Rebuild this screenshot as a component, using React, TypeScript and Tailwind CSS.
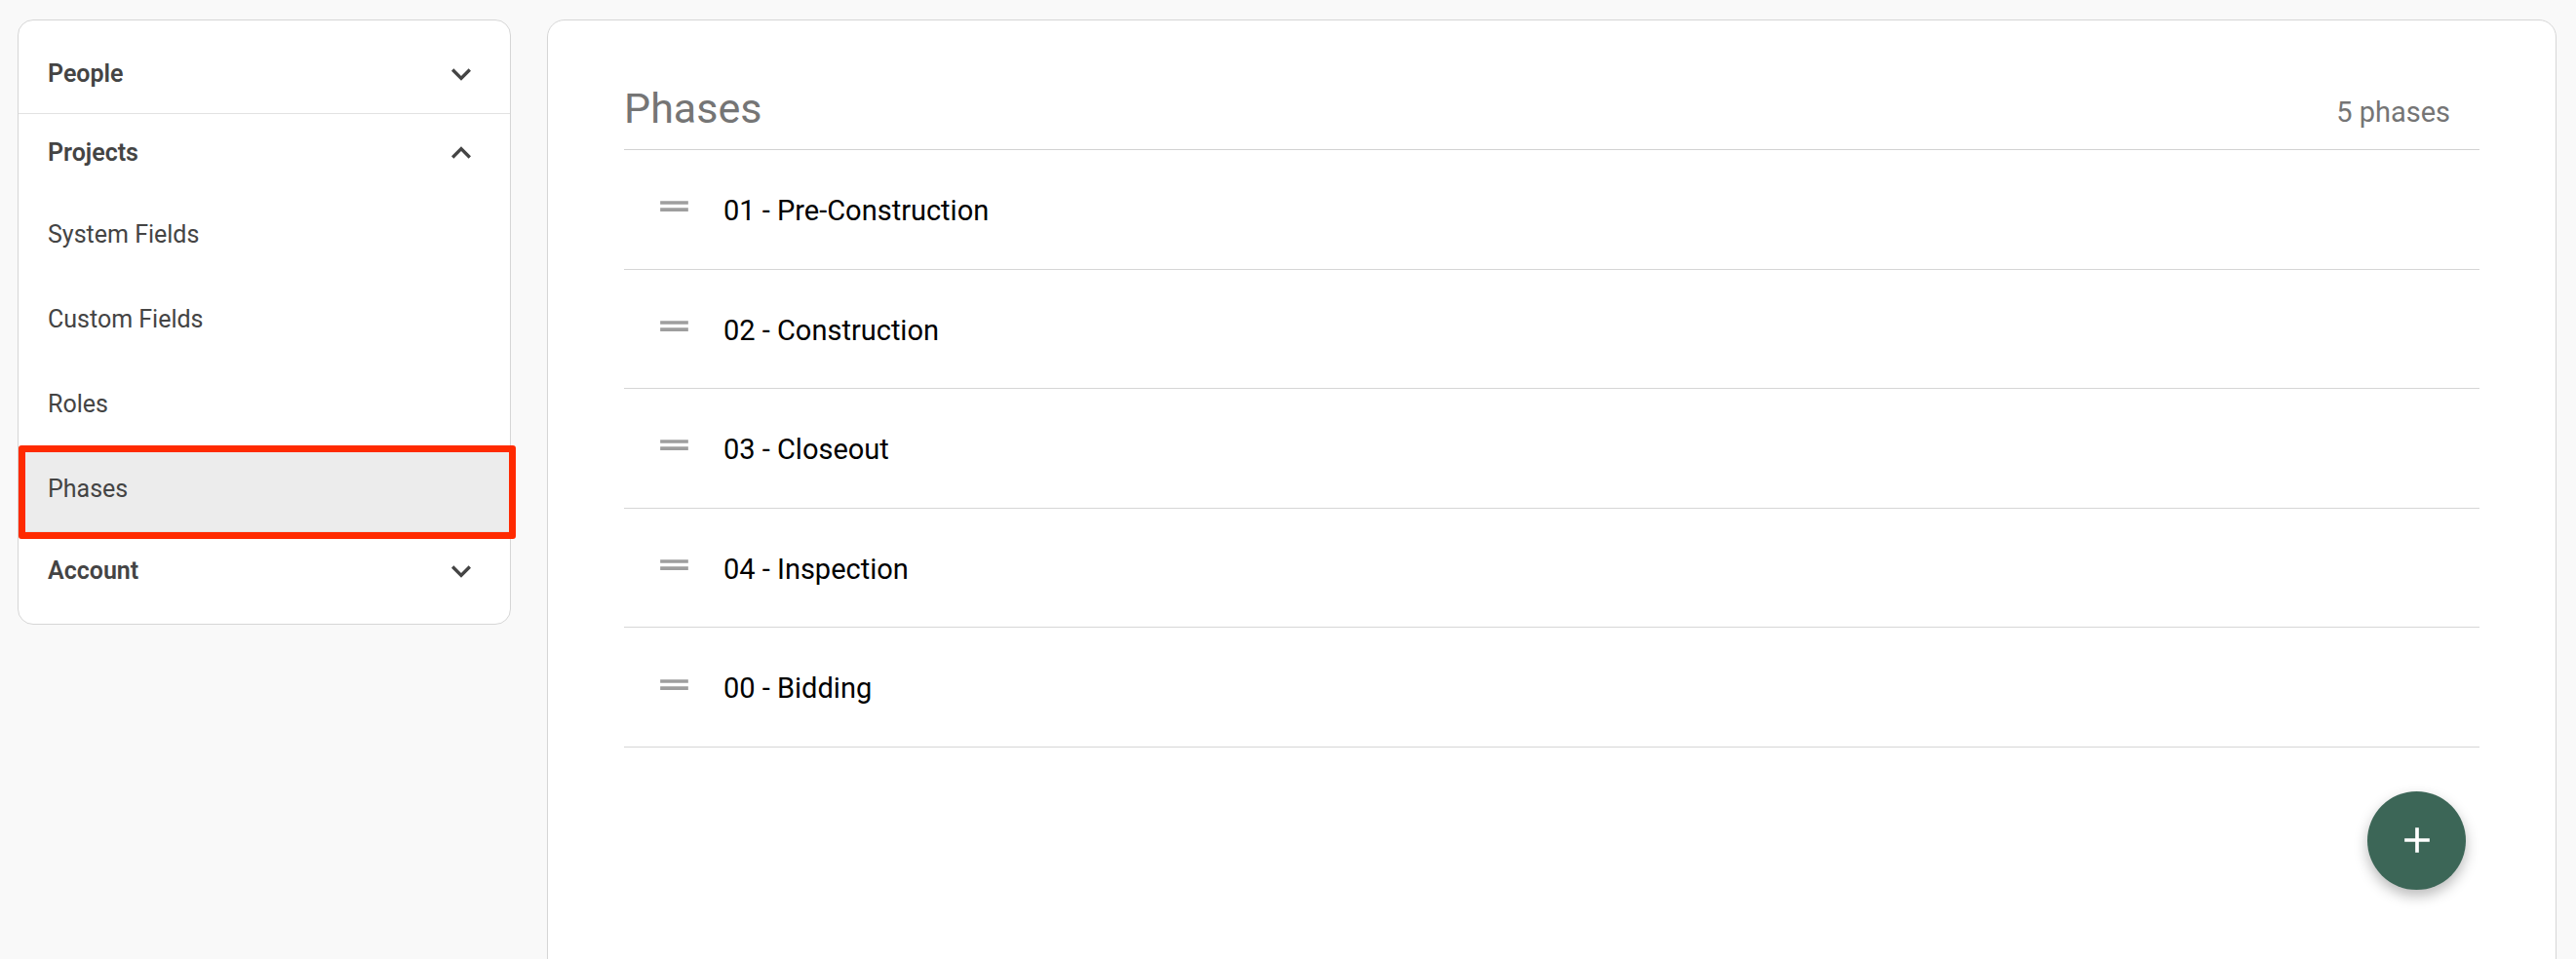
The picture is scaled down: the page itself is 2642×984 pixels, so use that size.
import { MdExpandMore, MdExpandLess, MdDragHandle, MdAdd } from "react-icons/md";

const phases = [
  "01 - Pre-Construction",
  "02 - Construction",
  "03 - Closeout",
  "04 - Inspection",
  "00 - Bidding",
];

const projectItems = ["System Fields", "Custom Fields", "Roles", "Phases"];

function SectionHeader({ label, open }: { label: string; open?: boolean }) {
  return (
    <div className="flex h-[80px] items-center justify-between pl-[30px] pr-[30px]">
      <span className="text-[25px] font-semibold text-[#444]">{label}</span>
      {open ? (
        <MdExpandLess className="h-[40px] w-[40px] text-[#444]" />
      ) : (
        <MdExpandMore className="h-[40px] w-[40px] text-[#444]" />
      )}
    </div>
  );
}

function Sidebar() {
  return (
    <aside className="w-[506px] shrink-0 self-start rounded-[16px] border border-[#d6d6d6] bg-white pt-[15px] pb-[14px]">
      <div className="border-b border-[#e2e2e2]">
        <SectionHeader label="People" />
      </div>
      <div className="border-b border-[#e2e2e2]">
        <SectionHeader label="Projects" open />
        {projectItems.map((item) => {
          const active = item === "Phases";
          return (
            <div
              key={item}
              className={`relative flex h-[87px] items-center pl-[30px] text-[25px] text-[#444] ${active ? "bg-[#ececec]" : ""}`}
            >
              {item}
              {active && (
                <div className="pointer-events-none absolute -top-[1px] left-0 -right-[6px] -bottom-[8px] rounded-[3px] border-[7px] border-[#ff2a00]" />
              )}
            </div>
          );
        })}
      </div>
      <SectionHeader label="Account" />
    </aside>
  );
}

function PhaseList() {
  return (
    <section className="h-[1000px] flex-1 rounded-[18px] border border-[#d6d6d6] bg-white px-[78px]">
      <div className="flex h-[133px] items-end justify-between border-b border-[#d2d2d2] pb-[18px] pr-[30px]">
        <h1 className="text-[43px] leading-[48px] font-normal text-[#757575]">Phases</h1>
        <span className="-mb-[2px] text-[29px] text-[#757575]">5 phases</span>
      </div>
      {phases.map((p) => (
        <div key={p} className="flex h-[122.6px] items-center border-b border-[#d6d6d6] pl-[30px]">
          <MdDragHandle className="mb-[6px] h-[43px] w-[43px] text-[#9e9e9e]" />
          <span className="ml-[29px] mt-[4px] text-[29px] text-black">{p}</span>
        </div>
      ))}
      <div className="mt-[45px] flex justify-end pr-[14px]">
        <button className="flex h-[101px] w-[101px] items-center justify-center rounded-full bg-[#3c6657] shadow-[0_6px_14px_rgba(0,0,0,0.28)]">
          <MdAdd className="h-[44px] w-[44px] text-white" />
        </button>
      </div>
    </section>
  );
}

export default function App() {
  return (
    <div className="h-[984px] overflow-hidden bg-[#f9f9f9] font-['Roboto','Noto_Sans',sans-serif]">
      <div className="flex gap-[37px] pt-[20px] pl-[18px] pr-[20px]">
        <Sidebar />
        <PhaseList />
      </div>
    </div>
  );
}
